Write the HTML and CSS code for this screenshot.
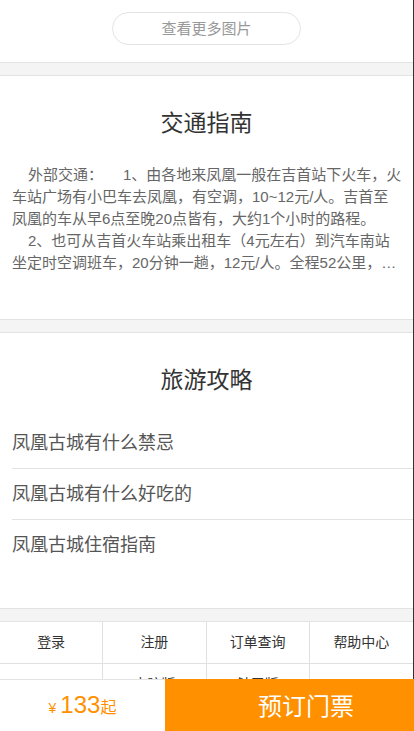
FILE: index.html
```html
<!DOCTYPE html>
<html lang="zh-CN">
<head>
<meta charset="utf-8">
<meta name="viewport" content="width=device-width, initial-scale=1">
<title>凤凰古城门票</title>
<link rel="stylesheet" href="styles.css">
</head>
<body>
<div class="page">
  <div class="more-wrap">
    <a class="more-btn" href="#">查看更多图片</a>
  </div>
  <div class="gap"></div>

  <section class="block traffic">
    <h2 class="block-title">交通指南</h2>
    <p class="traffic-text"><span class="indent"></span>外部交通：<span class="sp"></span>1、由各地来凤凰一般在吉首站下火车，火车站广场有小巴车去凤凰，有空调，10~12元/人。吉首至凤凰的车从早6点至晚20点皆有，大约1个小时的路程。<br><span class="indent"></span>2、也可从吉首火车站乘出租车（4元左右）到汽车南站坐定时空调班车，20分钟一趟，12元/人。全程52公里，约1个小时可到达凤凰古城。</p>
  </section>
  <div class="gap"></div>

  <section class="block guide">
    <h2 class="block-title">旅游攻略</h2>
    <ul class="guide-list">
      <li class="guide-item"><a href="#">凤凰古城有什么禁忌</a></li>
      <li class="guide-item"><a href="#">凤凰古城有什么好吃的</a></li>
      <li class="guide-item"><a href="#">凤凰古城住宿指南</a></li>
    </ul>
  </section>
  <div class="gap"></div>

  <nav class="foot-links">
    <a href="#">登录</a>
    <a href="#">注册</a>
    <a href="#">订单查询</a>
    <a href="#">帮助中心</a>
    <a href="#"></a>
    <a href="#">电脑版</a>
    <a href="#">触屏版</a>
    <a href="#">APP</a>
  </nav>
  <div class="foot-space"></div>
</div>

<div class="buy-bar">
  <div class="price"><span class="yen">¥</span><span class="num">133</span><span class="qi">起</span></div>
  <a class="buy-btn" href="#">预订门票</a>
</div>
</body>
</html>
```

FILE: styles.css
```css
* {
  box-sizing: border-box;
}

html, body {
  margin: 0;
  padding: 0;
  background: #fff;
}

body {
  font-family: "Liberation Sans", "Noto Sans CJK SC", sans-serif;
  color: #333;
  text-spacing-trim: space-all;
}

a {
  text-decoration: none;
  color: inherit;
}

.page {
  width: 100%;
  border-right: 1px solid #333;
}

.more-wrap {
  padding: 12px 0 17px;
  display: flex;
  justify-content: center;
}

.more-btn {
  width: 189px;
  height: 33px;
  border: 1px solid #e3e3e3;
  border-radius: 17px;
  font-size: 15px;
  line-height: 31px;
  color: #999;
  text-align: center;
}

.gap {
  height: 14px;
  background: #f4f4f4;
  border-top: 1px solid #e3e3e3;
  border-bottom: 1px solid #e3e3e3;
}

.block {
  padding-top: 32px;
}

.block-title {
  margin: 0;
  font-size: 23px;
  line-height: 30px;
  font-weight: normal;
  color: #333;
  text-align: center;
}

.traffic {
  padding-bottom: 45px;
}

.traffic-text {
  margin: 26px 0 0;
  padding: 0 10px 0 12px;
  font-size: 15px;
  line-height: 22px;
  color: #666;
  display: -webkit-box;
  -webkit-box-orient: vertical;
  -webkit-line-clamp: 5;
  overflow: hidden;
}

.indent {
  display: inline-block;
  width: 16px;
}

.sp {
  display: inline-block;
  width: 20px;
}

.guide {
  padding-bottom: 38px;
}

.guide-list {
  list-style: none;
  margin: 23px 0 0;
  padding: 0 0 0 12px;
}

.guide-item {
  height: 51px;
  line-height: 50px;
  font-size: 18px;
  color: #555;
  border-bottom: 1px solid #e3e3e3;
}

.guide-item:last-child {
  height: 50px;
  border-bottom: none;
}

.foot-links {
  display: grid;
  grid-template-columns: repeat(4, 1fr);
}

.foot-links a {
  height: 42px;
  line-height: 41px;
  font-size: 14px;
  color: #333;
  text-align: center;
  border-right: 1px solid #e0e0e0;
  border-bottom: 1px solid #e0e0e0;
}

.foot-links a:nth-child(4n) {
  border-right: none;
}

.foot-space {
  height: 60px;
}

.buy-bar {
  position: fixed;
  left: 0;
  right: 0;
  bottom: 0;
  height: 52px;
  display: flex;
  background: #fff;
}

.price {
  width: 165px;
  border-top: 1px solid #e3e3e3;
  display: flex;
  justify-content: center;
  align-items: baseline;
  padding-top: 10px;
  color: #ff9000;
}

.yen {
  font-size: 14px;
  margin-right: 4px;
}

.num {
  font-size: 24px;
  line-height: 30px;
}

.qi {
  font-size: 16px;
  font-family: "Noto Sans CJK SC", sans-serif;
}

.buy-btn {
  flex: 1;
  background: #ff9000;
  color: #fff;
  font-family: "Noto Sans CJK SC", sans-serif;
  font-size: 24px;
  line-height: 52px;
  text-align: center;
  padding-left: 33px;
}
```
